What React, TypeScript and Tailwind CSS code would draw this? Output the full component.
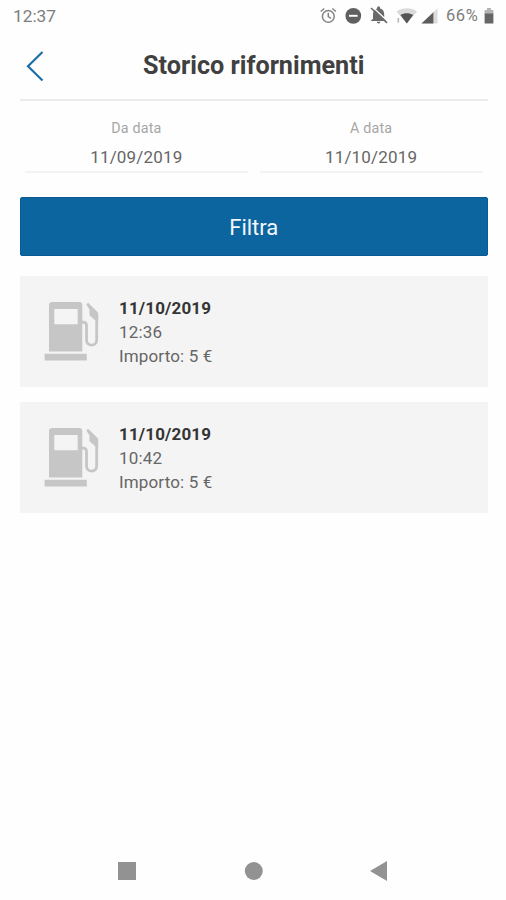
const refuels = [
  { id: 1, date: "11/10/2019", time: "12:36", amount: "5 €" },
  { id: 2, date: "11/10/2019", time: "10:42", amount: "5 €" }
];

function StatusIcons() {
  return (
    <svg width="128" height="20" viewBox="318 6 128 20" aria-hidden="true">
      {/* alarm */}
      <g fill="none" stroke="#858585" strokeWidth="1.5">
        <circle cx="328.3" cy="16.4" r="5.9" />
        <path d="M328.3 12.8v3.8l2.8 1.7M320.7 11.5l3.6-3M335.9 11.5l-3.6-3" />
      </g>
      {/* do not disturb */}
      <circle cx="353.3" cy="15.8" r="7.9" fill="#606060" />
      <path d="M349 15.8h8.6" stroke="#fff" strokeWidth="1.9" />
      {/* muted bell */}
      <path
        d="M370.6 21l2.4-2.2v-4.6c0-3.2 1.5-5.2 4.1-5.8v-.6a1.5 1.5 0 0 1 3 0v.6c2.6.6 4.1 2.6 4.1 5.8v4.6l2.2 2.2zM376.8 21.7h3.6a1.8 1.8 0 0 1-3.6 0z"
        fill="#6a6a6a"
      />
      <path d="M373.4 7.8l14 13.2" stroke="#fefefe" strokeWidth="1.3" />
      <path d="M371 8l16 14.8" stroke="#6a6a6a" strokeWidth="1.6" />
      {/* wifi */}
      <path d="M396.5 11.4c6-4.2 14.6-4.2 20.6 0l-10.3 12.1z" fill="#dadada" />
      <path d="M400.4 15c3.8-2.4 9-2.4 12.8 0l-6.4 8.5z" fill="#555" />
      <path d="M398.3 18v4.6" stroke="#b5b5b5" strokeWidth="1.6" />
      {/* signal */}
      <path d="M421.5 23.4L437.5 8.3v15.1z" fill="#dcdcdc" />
      <path d="M421.5 23.4L433.4 12.2v11.2z" fill="#5c5c5c" />
    </svg>
  );
}

function StatusBar() {
  return (
    <div className="flex h-8 items-center pl-[13px] pr-[12px] text-[#7d7d7d]">
      <span className="text-[17.3px] leading-5">12:37</span>
      <div className="ml-auto flex items-center">
        <StatusIcons />
        <span className="w-[34px] text-[16.5px] leading-5 tracking-[0.6px]">66%</span>
        <svg className="ml-1" width="10" height="16" viewBox="0 0 10 16" aria-hidden="true">
          <path d="M3 0h4v2h2.4v4H.6V2H3z" fill="#b4b4b4" />
          <path d="M.6 5.5h8.8v10H.6z" fill="#666" />
        </svg>
      </div>
    </div>
  );
}

function DateField({ label, value }: { label: string; value: string }) {
  return (
    <div className="flex-1 border-b-2 border-[#f3f3f3] text-center">
      <div className="text-[14.3px] leading-5 tracking-[0.2px] text-[#a6a6a6]">{label}</div>
      <div className="mt-2 h-[25px] text-[17px] leading-[22px] tracking-[0.2px] text-[#666]">
        {value}
      </div>
    </div>
  );
}

function PumpIcon() {
  return (
    <svg
      className="shrink-0"
      width="56"
      height="62"
      viewBox="0 0 56 62"
      fill="#c6c6c6"
      aria-hidden="true"
    >
      <path
        fillRule="evenodd"
        d="M5 51.5V5a3 3 0 0 1 3-3h27.3a3 3 0 0 1 3 3v46.5zM10.3 9v15.3h23.4V9z"
      />
      <path d="M.6 53.7h42.2v6.8H.6z" />
      <path
        d="M37 22.2h2.2c2.2 0 3.3 1.2 3.3 3.4v14.2c0 7.2 10.2 7.2 10.2 0V16"
        fill="none"
        stroke="#c6c6c6"
        strokeWidth="2.8"
      />
      <path d="M42.3 4.5l1.8-1.7 9.2 9a3 3 0 0 1 .9 2.1v8.4l-3-2-5.7-5.1v-5.8z" />
    </svg>
  );
}

function RefuelCard({ date, time, amount }: { date: string; time: string; amount: string }) {
  return (
    <li className="flex h-[111px] bg-[#f4f4f4] pl-6 pt-6">
      <PumpIcon />
      <div className="-mt-1 ml-[19px] text-[17px] leading-6 tracking-[0.15px] text-[#666]">
        <p className="font-bold text-[#353535]">{date}</p>
        <p>{time}</p>
        <p>Importo: {amount}</p>
      </div>
    </li>
  );
}

export default function App() {
  return (
    <div className="flex h-[900px] w-[506px] flex-col bg-[#fefefe] font-['Roboto',sans-serif]">
      <StatusBar />

      <main className="flex-1 pl-5 pr-[18.5px]">
        <header className="flex h-[69px] items-center border-b-2 border-[#ebebeb]">
          <button type="button" aria-label="Indietro" className="ml-1.5 w-5">
            <svg width="20" height="32" viewBox="0 0 20 32" aria-hidden="true">
              <path d="M16.5 2L2 16.2 16.5 30.5" fill="none" stroke="#1b6fa8" strokeWidth="2.2" />
            </svg>
          </button>
          <h1 className="flex-1 pr-[26px] pt-px text-center text-[25.2px] font-bold leading-8 text-[#404040]">
            Storico rifornimenti
          </h1>
        </header>

        <div className="flex gap-3 px-[5px] pt-[17px]">
          <DateField label="Da data" value="11/09/2019" />
          <DateField label="A data" value="11/10/2019" />
        </div>

        <button
          type="button"
          className="mt-6 block h-[59px] w-full rounded-[2px] border border-[#0a5a93] bg-[#0c659f] pt-0.5 text-[22px] text-[#f2f7fb]"
        >
          Filtra
        </button>

        <ul className="mt-5 flex flex-col gap-[15px]">
          {refuels.map((refuel) => (
            <RefuelCard
              key={refuel.id}
              date={refuel.date}
              time={refuel.time}
              amount={refuel.amount}
            />
          ))}
        </ul>
      </main>

      <nav className="flex h-[58px] items-center justify-between pl-[117px] pr-[117px]">
        <svg width="20" height="20" viewBox="0 0 20 20" fill="#929292" aria-hidden="true">
          <path d="M1 1h18v18H1z" />
        </svg>
        <svg width="20" height="20" viewBox="0 0 20 20" fill="#929292" aria-hidden="true">
          <circle cx="10.8" cy="10" r="9" />
        </svg>
        <svg width="20" height="20" viewBox="0 0 20 20" fill="#929292" aria-hidden="true">
          <path d="M1 10L18 0v20z" />
        </svg>
      </nav>
    </div>
  );
}
